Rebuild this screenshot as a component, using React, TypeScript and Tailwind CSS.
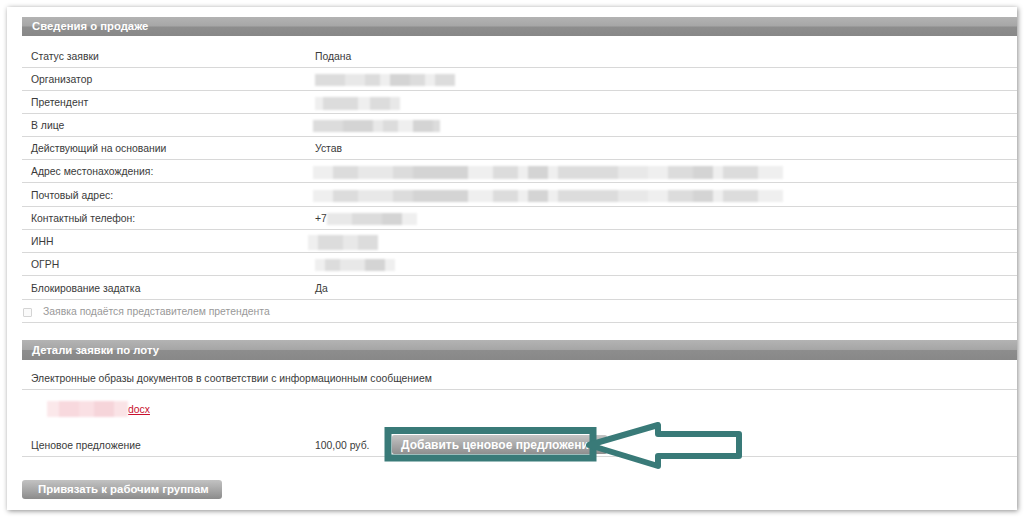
import React from "react";

type Seg = [number, string];

// pixelated, blurred placeholder for masked personal data
function Masked({ segs, h = 12, tint = "gray" }: { segs: Seg[]; h?: number; tint?: "gray" | "pink" }) {
  return (
    <div className={`flex blur-[1px] ${tint === "pink" ? "opacity-80" : ""}`} style={{ height: h }}>
      {segs.map(([w, c], i) => (
        <span key={i} className="h-full" style={{ width: w, background: c }} />
      ))}
    </div>
  );
}

const g1 = "#e8e8e8";
const g2 = "#dcdcdc";
const g3 = "#efefef";
const g4 = "#d4d4d4";

const longAddr: Seg[] = [
  [20, g3], [25, g2], [35, g1], [20, g2], [55, g4], [25, g3], [25, g2], [10, g3], [20, g4], [10, g3], [60, g2], [30, g1], [20, g3], [25, g2], [20, g4], [10, g3], [35, g2], [25, g3],
];

function Row({ label, children, h = "h-[23px]" }: { label: string; children?: React.ReactNode; h?: string }) {
  return (
    <div className={`grid grid-cols-[293px_1fr] items-center pt-[2px] border-b border-[#d8d8d8] ${h}`}>
      <div className="pl-[9px] text-[#3a3a3a]">{label}</div>
      <div className="text-[#3a3a3a]">{children}</div>
    </div>
  );
}

function SectionHeader({ title, h = "h-[19px]" }: { title: string; h?: string }) {
  return (
    <div className={`${h} flex items-center pl-[10px] bg-[linear-gradient(#b3b3b3,#a6a6a6_48%,#8d8d8d_52%,#888888)] text-white font-bold text-[11.3px]`}>
      {title}
    </div>
  );
}

export default function App() {
  return (
    <div className="w-[1026px] h-[519px] bg-white pt-[7px] pl-[7px] font-['Liberation_Sans',Arial,sans-serif] text-[10.4px]">
      <div className="w-[1010px] h-[503px] bg-white shadow-[1px_1px_5px_rgba(0,0,0,0.45)] pt-[10px] pl-[15px] flex flex-col">
        <SectionHeader title="Сведения о продаже" />
        <div className="mt-[9px] flex flex-col">
          <Row label="Статус заявки">Подана</Row>
          <Row label="Организатор">
            <Masked segs={[[30, g2], [20, g1], [15, g2], [10, g3], [20, g4], [15, g2], [10, g3], [20, g2]]} />
          </Row>
          <Row label="Претендент">
            <Masked h={13} segs={[[8, g3], [35, g2], [12, g3], [20, g2], [10, g1]]} />
          </Row>
          <Row label="В лице">
            <div className="-ml-[2px]">
              <Masked segs={[[30, g2], [30, g4], [10, g1], [15, g2], [15, g3], [20, g4], [7, g2]]} />
            </div>
          </Row>
          <Row label="Действующий на основании">Устав</Row>
          <Row label="Адрес местонахождения:">
            <div className="-ml-[2px]">
              <Masked h={13} segs={longAddr} />
            </div>
          </Row>
          <Row label="Почтовый адрес:" h="h-[24px]">
            <div className="-ml-[2px]">
              <Masked segs={longAddr} />
            </div>
          </Row>
          <Row label="Контактный телефон:">
            <div className="flex items-center">
              <span>+7</span>
              <Masked segs={[[25, g1], [30, g2], [20, g4], [15, g3]]} />
            </div>
          </Row>
          <Row label="ИНН">
            <div className="-ml-[7px]">
              <Masked h={15} segs={[[10, g3], [25, g2], [15, g1], [20, g2]]} />
            </div>
          </Row>
          <Row label="ОГРН">
            <Masked segs={[[10, g3], [15, g2], [25, g1], [20, g4], [10, g3]]} />
          </Row>
          <Row label="Блокирование задатка" h="h-[24px]">Да</Row>
          <div className="h-[23px] pt-[2px] flex items-center border-b border-[#d8d8d8]">
            <span className="ml-[1px] w-[9px] h-[9px] border border-[#d4d4d4] rounded-[1px] bg-[#fafafa]" />
            <span className="ml-[11px] text-[#999]">Заявка подаётся представителем претендента</span>
          </div>
        </div>

        <div className="mt-[17px]">
          <SectionHeader title="Детали заявки по лоту" h="h-[20px]" />
        </div>
        <div className="mt-[7px] h-[23px] pt-[2px] flex items-center pl-[9px] border-b border-[#d8d8d8] text-[#3a3a3a]">
          Электронные образы документов в соответствии с информационным сообщением
        </div>
        <div className="h-[43px] flex items-start pt-[11px] pl-[25px]">
          <Masked h={16} tint="pink" segs={[[12, "#fbe3e6"], [20, "#f7d0d6"], [15, "#f9d9de"], [20, "#f5cbd2"], [14, "#f9dde1"]]} />
          <a className="text-[#c8102e] underline leading-[17px]">docx</a>
        </div>
        <div className="relative">
          <div className="grid grid-cols-[293px_1fr] items-center h-[24px] border-b border-[#d8d8d8]">
            <div className="pl-[9px] pt-[2px] text-[#3a3a3a]">Ценовое предложение</div>
            <div className="flex items-center text-[#3a3a3a]">
              <span className="w-[77px] pt-[2px]">100,00 руб.</span>
              <button className="h-[19px] pl-[9px] pr-[12px] rounded-[2px] bg-[linear-gradient(#c4c4c4,#a9a9a9_50%,#8f8f8f)] text-white font-bold text-[12px] whitespace-nowrap">
                Добавить ценовое предложение
              </button>
            </div>
          </div>
          <svg className="absolute left-[360px] top-[-14px]" width="370" height="56" viewBox="0 0 370 56">
            <rect x="6" y="11.5" width="205" height="27.5" fill="none" stroke="#397a78" strokeWidth="7" />
            <polygon
              points="207,26 276,6 276,15 357,15 357,37 276,37 276,47"
              fill="#ffffff"
              stroke="#397a78"
              strokeWidth="6"
              strokeLinejoin="round"
            />
          </svg>
        </div>

        <div className="mt-[23px]">
          <button className="h-[19px] w-[200px] rounded-[3px] bg-[linear-gradient(#c2c2c2,#a8a8a8_50%,#8b8b8b)] text-white font-bold text-[11.4px] text-left pl-[16px]">
            Привязать к рабочим группам
          </button>
        </div>
      </div>
    </div>
  );
}
